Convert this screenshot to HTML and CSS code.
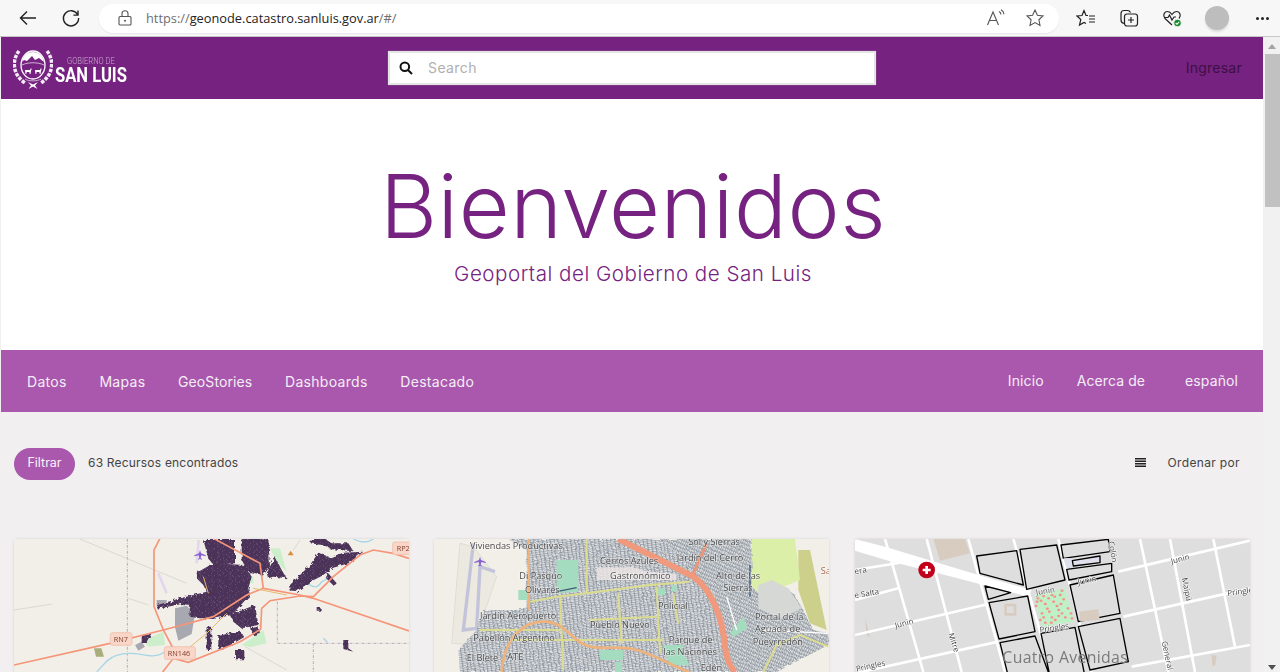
FILE: index.html
```html
<!DOCTYPE html>
<html lang="es">
<head>
<meta charset="utf-8">
<title>Geoportal del Gobierno de San Luis</title>
<link rel="stylesheet" href="styles.css">
</head>
<body>
<div class="window">
  <div class="chrome">
    <button class="tool tool-back"><svg width="20" height="20" viewBox="0 0 20 20"><path class="ic" d="M18 10H2.500M9 3.500 2.500 10 9 16.500"/></svg></button>
    <button class="tool tool-reload"><svg width="20" height="20" viewBox="0 0 20 20"><path class="ic" d="M16.600 6.500A7.600 7.600 0 1 0 17.600 10M17 2.500v4.600h-4.600"/></svg></button>
    <div class="address">
      <svg class="lock" width="14" height="16" viewBox="0 0 14 16"><path class="ic-thin" d="M2 6.500h10a1 1 0 0 1 1 1V14a1 1 0 0 1-1 1H2a1 1 0 0 1-1-1V7.500a1 1 0 0 1 1-1ZM4 6.500V3.800a3 3 0 0 1 6 0v2.700"/><circle class="ic-fill" cx="7" cy="10.700" r="1"/></svg>
      <span class="url"><span class="url-dim">https://</span>geonode.catastro.sanluis.gov.ar<span class="url-dim">/#/</span></span>
      <div class="addr-end">
        <svg width="20" height="18" viewBox="0 0 20 18"><path class="ic-thin" d="M1.500 16 7 3l5.500 13M3.500 11.500h7M13 2.500c1.200.6 1.800 1.500 2 3M15 .8c1.800.9 2.800 2.300 3 4.500"/></svg>
        <svg width="20" height="20" viewBox="0 0 20 20"><path class="ic-thin" d="m10 2 2.400 5.200 5.600.7-4.100 3.900 1.100 5.600-5-2.800-5 2.800 1.100-5.600L2 7.900l5.600-.7Z"/></svg>
      </div>
    </div>
    <div class="tools-right">
      <svg width="20" height="20" viewBox="0 0 20 20"><path class="ic-med" d="M12 7.500H10L8 2.500 6 7.500 1 8l3.800 3.500L3.500 17 8 14.500l2 1M13 8h6M13 11h6M13 14h6"/></svg>
      <svg width="20" height="20" viewBox="0 0 20 20"><path class="ic-med" d="M5 15.500C3 15 2 14 2 12V5.500C2 3.500 3.500 2.500 5 2.500h3.500c1.500 0 2.500.8 3 2"/><rect class="ic-med" x="5.500" y="6" width="13" height="12" rx="2.500"/><path class="ic-med" d="M12 9v6M9 12h6"/></svg>
      <svg width="20" height="20" viewBox="0 0 20 20"><path class="ic-med" d="M10 17 3 10.500C.5 8 2 3.500 5.500 3.500c2 0 3.500 1.500 4.500 3 1-1.500 2.500-3 4.500-3C18 3.500 19.500 8 17 10.500M2.500 9.500H6l1.500-2.500 2.500 5 2-3h2"/><circle class="badge" cx="15.500" cy="15" r="3.800"/><path class="badge-check" d="m13.700 15 1.300 1.300 2.200-2.400"/></svg>
      <span class="avatar"></span>
      <span class="dots"><i></i><i></i><i></i></span>
    </div>
  </div>

  <div class="viewport">
    <main class="page">
      <header class="topbar">
        <a class="logo">
          <svg class="crest" width="40" height="42" viewBox="0 0 40 42">
            <path class="crest-wreath" d="M6 3C-1 12-1 26 12 35M34 3C41 12 41 26 28 35"/>
            <ellipse class="crest-ring" cx="20" cy="17" rx="12" ry="14"/>
            <path class="crest-leaf" d="M9 14C10 7 15 4 20 4s10 3 11 10l-5-4-4 2-3-4-5 5-3-1Z"/>
            <path class="crest-thin" d="M9 17c6-3 16-3 22 0"/>
            <path class="crest-leaf" d="M12 22h5l1-2 .6 1-.6 2-.5 3h-.8l-.4-2h-2.600l-.4 2h-.8ZM22 22h5l1-2 .6 1-.6 2-.5 3h-.8l-.4-2h-2.600l-.4 2h-.8Z"/>
            <path class="crest-thin" d="M12 31c4 2.500 12 2.500 16 0"/>
            <path class="crest-leaf" d="m15 34 5 2.500 5-2.500-3 3.500 2.500 3.500-4.500-2.500L15.500 41l2.500-3.500Z"/>
          </svg>
          <span class="logo-text"><span class="logo-small">GOBIERNO DE</span><span class="logo-big">SAN LUIS</span></span>
        </a>
        <div class="search">
          <svg width="14" height="14" viewBox="0 0 14 14"><circle class="search-ic" cx="5.800" cy="5.800" r="4.300"/><path class="search-ic" d="m9 9 4 4"/></svg>
          <span class="placeholder">Search</span>
        </div>
        <a class="login">Ingresar</a>
      </header>

      <section class="hero">
        <h1>Bienvenidos</h1>
        <p>Geoportal del Gobierno de San Luis</p>
      </section>

      <nav class="menu">
        <ul class="menu-left">
          <li>Datos</li><li>Mapas</li><li class="tight">GeoStories</li><li>Dashboards</li><li>Destacado</li>
        </ul>
        <ul class="menu-right">
          <li>Inicio</li><li>Acerca de</li><li>español</li>
        </ul>
      </nav>

      <div class="toolbar">
        <button class="filter">Filtrar</button>
        <span class="count">63 Recursos encontrados</span>
        <svg class="list-ic" width="11" height="9" viewBox="0 0 11 9"><path class="list-lines" d="M0 .8h11M0 3.300h11M0 5.800h11M0 8.200h11"/></svg>
        <span class="sort">Ordenar por</span>
      </div>

      <div class="cards">
        <article class="card">
          <svg class="map" viewBox="42 27 1185 420">
            <defs>
              <filter id="rough" x="-5%" y="-5%" width="110%" height="110%">
                <feTurbulence type="fractalNoise" baseFrequency=".09" numOctaves="2" seed="4"/>
                <feDisplacementMap in="SourceGraphic" scale="14"/>
              </filter>
              <filter id="wobble" x="-5%" y="-5%" width="110%" height="110%">
                <feTurbulence type="fractalNoise" baseFrequency=".05" numOctaves="2" seed="9"/>
                <feDisplacementMap in="SourceGraphic" scale="12"/>
              </filter>
              <pattern id="cityTex" width="18" height="16" patternUnits="userSpaceOnUse">
                <rect class="tex-base" width="18" height="16"/>
                <path class="tex-spot" d="M3 3h3M12 9h3M7 13h2"/>
              </pattern>
            </defs>
            <rect class="m1-bg" x="42" y="27" width="1185" height="420"/>
            <path class="m1-park" d="M725 345 790 300 800 340 750 352ZM430 330 490 305 495 345 445 350ZM660 75h20v20h-20ZM810 55h30l20 70-30-30ZM740 140h20v20h-20Z"/>
            <path class="m1-olive" d="M282 355h22l8 25h-24Z"/>
            <path class="m1-bound" d="M382 27V426M832 215V340H1227M940 340V426"/>
            <path class="m1-thin" d="M240 27 560 160M42 240l115-18M735 350 860 420M880 60 900 30M385 205l60 20"/>
            <path class="m1-water" d="M290 426c20-20 30-40 60-50s60-5 90 0 50-5 60-15M920 160c20 10 30 20 45-5 10-5 20-10 30-15M1060 27c20 10 40 15 60 0M970 325l12 12"/>
            <path class="m1-air" d="M596 30 590 100M475 130l25 60"/>
            <path class="m1-grey" d="M525 235l35-8 25 25-10 60-40 20-10-40ZM470 210h30v20h-30ZM405 345l20-10 10 15-20 12Z"/>
            <g class="m1-rough">
              <path class="m1-city" d="M610 30H705L705 100 640 105 625 85ZM725 25H805L810 110 790 135 745 125 725 90Z"/>
              <path class="m1-city" d="M595 125 640 100 735 105 755 140 745 175 750 195 695 255 640 267 600 265 568 260 570 225 545 222 472 236 470 226 540 205 620 185 610 165 590 145Z"/>
              <path class="m1-city" d="M690 255 765 225 775 285 725 295 700 275ZM655 318 720 302 732 322 680 352 655 358ZM620 290h14v70h-14ZM705 360h28v28h-28ZM425 320l30-10-15 25-15 5ZM750 295l25-5 5 18-20 8ZM800 130l25-50 20 40 15 25-40-5-15 5Z"/>
              <path class="m1-city" d="M870 165 930 105 955 68 990 82 1030 68 1090 65 1050 98 1000 113 965 138 925 158 890 185 872 185ZM932 27H975L995 40H1045L1060 64 995 58 965 45 932 40ZM950 230l12 2v10h-12ZM1030 330h15v25l15 10-30-8ZM985 130l25 30-8 8-25-25Z"/>
            </g>
            <path class="m1-road" d="M42 405 330 340 490 300 640 260 740 195 790 175 900 195 940 205 1227 303"/>
            <path class="m1-road" d="M480 25 462 60V230L490 300 530 375M488 426 520 385 565 397 720 335 782 298 785 235 810 212 900 198 940 200 1000 140 1080 75 1120 60 1180 70 1227 85M640 25 780 100 790 175"/>
            <path class="m1-minor" d="M610 140 625 190M680 250 620 310 565 355M760 175 860 195"/>
            <path class="m1-tri" d="m872 62 9 14h-18Z"/>
            <path class="m1-plane" d="M600 60l3 10 14 6v3l-13-3-2 8 4 3v2l-6-2-6 2v-2l4-3-2-8-13 3v-3l14-6Z"/>
            <g class="m1-shield"><rect x="331" y="308" width="65" height="38" rx="6"/><rect x="493" y="350" width="93" height="38" rx="6"/><rect x="1178" y="36" width="60" height="38" rx="6"/></g>
            <text class="m1-label" x="341" y="335">RN7</text>
            <text class="m1-label" x="503" y="377">RN146</text>
            <text class="m1-label" x="1190" y="64">RP2</text>
          </svg>
        </article>

        <article class="card">
          <svg class="map" viewBox="12 27 1185 420">
            <defs>
              <pattern id="blocks" width="24" height="13" patternUnits="userSpaceOnUse" patternTransform="rotate(-8)">
                <rect class="m2-block" width="24" height="13"/>
                <path class="m2-street" d="M0 1h24M0 7.500h24M5 0v13M17 0v13"/>
              </pattern>
              <pattern id="blocksB" width="13" height="22" patternUnits="userSpaceOnUse" patternTransform="rotate(24)">
                <rect class="m2-block" width="13" height="22"/>
                <path class="m2-street" d="M1 0v22M7.500 0v22M0 6h13M0 17h13"/>
              </pattern>
            </defs>
            <rect class="m2-bg" x="12" y="27" width="1185" height="420"/>
            <path class="m2-apron" d="M90 40 65 340 130 345 200 140 130 50Z"/>
            <path class="m2-runway" d="M130 40 100 300 140 295 150 110 195 125"/>
            <path class="m2-olive" d="M1105 60 1140 60 1190 300 1140 280 1105 180Z"/>
            <path class="m2-pale" d="M965 27H1095L1110 150 1060 170 1000 200 965 170Z"/>
            <g class="m2-wobble">
              <path class="m2-blocks" d="M235 27 700 27 800 140 850 190 880 426 90 426 85 360 140 300 160 240 265 240 290 230 290 60Z"/>
              <path class="m2-blocks-b" d="M700 27 965 27 965 170 1000 200 1030 165 1090 190 1120 240 1150 300 1195 310 1195 345 1040 426 880 426 850 190 800 140Z"/>
            </g>
            <path class="m2-grey" d="M985 165l40-15 50 25 40 60-60 30-70-30Z"/>
            <path class="m2-green" d="M380 90h65v95l-65 5ZM900 310l40-50 12 35-40 25ZM265 180h30v30h-30ZM700 345h60v30l20 30h-60ZM510 360h70v30h-70ZM680 175h25v20h-25ZM725 165h15v20h-15ZM555 395h20v31h-20Z"/>
            <path class="m2-white" d="M500 112h110l40 12 90 8v18H500Z"/>
            <path class="m2-lines" d="M890 200 920 300M1000 300 1195 310"/>
            <path class="m2-yellow" d="M300 215 380 200 470 190 660 165 780 155M470 27V190M565 190 575 340M680 170 690 370M390 200 400 420M150 300H390M240 330H700M480 270 680 260M1195 350 1110 315 1040 345 1000 426M730 190 745 280"/>
            <path class="m2-road-thin" d="M215 426C220 340 270 270 350 275 410 280 430 340 480 350S560 345 620 360 760 426 780 426"/>
            <path class="m2-road-stem" d="M296 27V240"/>
            <path class="m2-main" d="M565 27 790 140C850 180 880 280 885 350 890 390 900 410 915 426"/>
            <path class="m2-main-b" d="M830 40 790 130"/>
            <path class="m2-dark" d="M380 185 440 173M960 105V200"/>
            <path class="m2-plane" d="M150 80l3 10 14 6v3l-13-3-2 8 4 3v2l-6-2-6 2v-2l4-3-2-8-13 3v-3l14-6Z"/>
            <text class="m2-label" x="120" y="58">Viviendas Productivas</text>
            <text class="m2-label" x="510" y="102">Cerros Azules</text>
            <text class="m2-label" x="740" y="93">Jardín del Cerro</text>
            <text class="m2-label" x="775" y="44">Sol y Sierras</text>
            <text class="m2-label" x="268" y="146">Di Pasquo</text>
            <text class="m2-label" x="540" y="146">Gastronómico</text>
            <text class="m2-label" x="858" y="146">Alto de las</text>
            <text class="m2-label" x="880" y="182">Sierras</text>
            <text class="m2-label" x="285" y="188">Olivares</text>
            <text class="m2-label" x="684" y="238">Policial</text>
            <text class="m2-label" x="150" y="267">Jardín Aeropuerto</text>
            <text class="m2-label" x="480" y="293">Pueblo Nuevo</text>
            <text class="m2-label" x="975" y="270">Portal de la</text>
            <text class="m2-label" x="975" y="307">Aguada de</text>
            <text class="m2-label" x="968" y="345">Pueyrredón</text>
            <text class="m2-label" x="130" y="334">Pabellón Argentino</text>
            <text class="m2-label" x="716" y="339">Parque de</text>
            <text class="m2-label" x="700" y="376">las Naciones</text>
            <text class="m2-label" x="110" y="393">El Blete</text>
            <text class="m2-label" x="232" y="389">ATE</text>
            <text class="m2-label" x="812" y="422">Edén</text>
            <text class="m2-label m2-edge" x="1172" y="131">Sa</text>
          </svg>
        </article>

        <article class="card">
          <svg class="map" viewBox="30 27 1185 420">
            <rect class="m3-bg" x="30" y="27" width="1185" height="420"/>
            <path class="m3-tan" d="M265 27 360 27 375 70 285 92ZM470 230l45-22 18 50-45 12ZM60 265l15 55-10-5ZM1100 375l15 2-5 30h-8Z"/>
            <path class="m3-road" d="M30 120 215 90M30 210 160 175M30 315 430 222M30 430 460 335M820 125 1215 32M835 260 1215 175M860 410 1215 345"/>
            <path class="m3-road" d="M120 27 235 426M245 27 350 426M370 27 480 426M505 27 620 426M640 27 740 426M885 27 970 426M975 27 1050 426M1105 27 1170 350"/>
            <path class="m3-avenue" d="M30 27 120 50 400 135 560 180 550 200 280 130 140 95 30 62Z"/>
            <path class="m3-block" d="M395 78 515 62 535 165 405 130ZM525 58 635 45 660 150 545 178ZM648 45 790 28 795 65 655 85ZM665 118 800 100 800 125 672 150ZM420 168 497 188 430 208ZM432 218 548 198 570 305 462 327ZM675 165 805 135 825 250 700 275ZM700 290 825 265 850 395 735 420ZM465 338 570 318 615 440H490ZM588 310 690 292 720 440H615Z"/>
            <path class="m3-lilac" d="M655 85 682 84 682 110 665 116Z"/>
            <path class="m3-strip" d="M682 92 765 78 765 98 685 108Z"/>
            <path class="m3-tan" d="M702 245l58-8 4 32-58 6Z"/>
            <path class="m3-tan-in" d="M482 225h28v28h-28Z"/>
            <path class="m3-park" d="M568 195 660 175 688 275 590 290Z"/>
            <path class="m3-dots" d="M578 205h2M595 198h2M620 195h2M650 182h2M572 228h2M600 222h2M625 215h2M655 208h2M590 250h2M612 245h2M640 240h2M668 235h2M600 278h2M630 270h2M660 262h2M680 265h2M585 270h2M610 205h2M635 228h2M575 215h2M645 195h2M620 262h2M650 250h2M587 212h2M606 236h2M628 200h2M647 222h2M677 250h2M595 262h2M640 258h2M618 278h2"/>
            <circle class="m3-pin" cx="245" cy="120" r="25"/>
            <path class="m3-cross" d="M245 108v24M233 120h24"/>
            <text class="m3-label" x="30" y="133" transform="rotate(-10 30 133)">era</text>
            <text class="m3-label" x="30" y="205" transform="rotate(-10 30 205)">e Salta</text>
            <text class="m3-label" x="152" y="295" transform="rotate(-15 152 295)">Junin</text>
            <text class="m3-label" x="310" y="312" transform="rotate(72 310 312)">Mitre</text>
            <text class="m3-label" x="35" y="425" transform="rotate(-12 35 425)">Pringles</text>
            <text class="m3-label" x="574" y="195" transform="rotate(-8 574 195)">Junin</text>
            <text class="m3-label" x="700" y="165" transform="rotate(-12 700 165)">Junin</text>
            <text class="m3-label" x="585" y="308" transform="rotate(-8 585 308)">Pringles</text>
            <text class="m3-label" x="980" y="102" transform="rotate(-15 980 102)">Junin</text>
            <text class="m3-label" x="1148" y="198" transform="rotate(-8 1148 198)">Pringles</text>
            <text class="m3-label" x="1010" y="145" transform="rotate(78 1010 145)">Maipú</text>
            <text class="m3-label" x="950" y="335" transform="rotate(78 950 335)">General</text>
            <text class="m3-label" x="790" y="35" transform="rotate(80 790 35)">Colón</text>
            <text class="m3-big" x="472" y="400">Cuatro Avenidas</text>
          </svg>
        </article>
      </div>
    </main>
    <div class="scrollbar">
      <span class="arrow-up"></span>
      <span class="thumb"></span>
      <span class="arrow-down"></span>
    </div>
  </div>
</div>
</body>
</html>
```

FILE: styles.css
```css
* { box-sizing: border-box; }
html, body { margin: 0; height: 100%; overflow: hidden; }
body { font-family: Inter, "Open Sans", sans-serif; background: #f1eff0; color: #333; }
ul { list-style: none; margin: 0; padding: 0; }
button { border: 0; background: none; padding: 0; font: inherit; }

.window { width: 1280px; height: 672px; display: flex; flex-direction: column; overflow: hidden; }

.chrome { height: 37px; flex: none; display: flex; align-items: center; background: #f7f7f7; border-bottom: 1px solid #c6c6c6; padding-left: 18px; }
.tool { width: 20px; height: 20px; display: flex; }
.tool-reload { margin-left: 23px; }
.ic { fill: none; stroke: #222; stroke-width: 1.4; }
.ic-thin { fill: none; stroke: #555; stroke-width: 1.1; }
.ic-med { fill: none; stroke: #222; stroke-width: 1.2; }
.ic-fill { fill: #555; }
.badge { fill: #178a2e; stroke: #fff; stroke-width: .8; }
.badge-check { fill: none; stroke: #fff; stroke-width: 1.1; }
.address { width: 960px; height: 29px; margin-left: 18px; border-radius: 15px; background: #fff; display: flex; align-items: center; padding-left: 19px; box-shadow: 0 1px 1px #e6e6e6; }
.lock { flex: none; }
.url { margin-left: 14px; font: 12.8px "Open Sans", sans-serif; color: #222; white-space: nowrap; }
.url-dim { color: #6e6e6e; }
.addr-end { margin-left: auto; display: flex; gap: 19px; padding-right: 14px; align-items: center; }
.tools-right { display: flex; align-items: center; margin-left: 17px; }
.tools-right > svg { margin-right: 23px; }
.avatar { width: 24px; height: 24px; margin-left: 0; border-radius: 50%; background: #bdbdbd; box-shadow: 0 2px 2px #dcdcdc; }
.dots { display: flex; gap: 2px; margin-left: 27px; }
.dots i { width: 3px; height: 3px; border-radius: 50%; background: #222; }

.viewport { flex: 1; min-height: 0; display: flex; }
.page { width: 1264px; height: 100%; overflow: hidden; padding-right: 1px; }

.topbar { height: 62px; margin-left: 1px; background: #762280; display: flex; align-items: center; padding: 0 21px 0 12px; }
.logo { display: flex; align-items: center; width: 375px; }
.crest { flex: none; margin-top: 1px; }
.crest-leaf { fill: #fff; }
.crest-wreath { fill: none; stroke: #fff; stroke-width: 3.500; stroke-dasharray: 3.500 1.200; opacity: .9; }
.crest-ring { fill: none; stroke: #fff; stroke-width: 1.300; }
.crest-thin { fill: none; stroke: #e6d3e8; stroke-width: .8; }
.logo-text { display: flex; flex-direction: column; align-items: flex-start; margin-left: 2px; padding-top: 4px; }
.logo-small { font: 300 9.500px/10px Roboto, sans-serif; color: #c9a6cf; margin-left: 12px; transform: scaleX(.8); transform-origin: left; white-space: nowrap; }
.logo-big { font: 700 21px/19px Roboto, sans-serif; color: #fff; transform: scaleX(.79); transform-origin: left; white-space: nowrap; }
.search { width: 488px; height: 34px; background: #fff; border: 2px solid #e4e4e4; display: flex; align-items: center; padding-left: 9px; box-shadow: 0 0 1px #999; }
.search-ic { fill: none; stroke: #111; stroke-width: 2; }
.placeholder { margin-left: 15px; padding-bottom: 1px; font-size: 14px; color: #b0b0b0; letter-spacing: .4px; }
.login { margin-left: auto; padding-bottom: 1px; font-size: 14px; color: #3d1044; letter-spacing: .25px; }

.hero { height: 251px; background: #fff; margin-left: 1px; color: #762280; text-align: center; display: flex; flex-direction: column; align-items: center; padding-top: 59px; padding-left: 2px; }
.hero h1 { margin: 0; font-size: 88px; line-height: 96px; font-weight: 300; letter-spacing: .55px; }
.hero p { margin: 6px 0 0; font-size: 20.600px; line-height: 28px; font-weight: 350; letter-spacing: .5px; }

.menu { height: 62px; margin-left: 1px; background: #a958ae; color: #f5eef6; display: flex; justify-content: space-between; align-items: center; padding: 0 25px 0 26px; font-size: 14px; letter-spacing: .3px; }
.menu-left { display: flex; gap: 32.700px; }
.menu-left .tight { letter-spacing: .1px; }
.menu-right { display: flex; gap: 33px; padding-bottom: 2px; letter-spacing: .1px; }
.menu-right li:last-child { margin-left: 7px; }

.toolbar { display: flex; align-items: center; height: 32px; margin-top: 36px; padding: 0 23px 0 14px; font-size: 12px; color: #444; }
.filter { width: 61px; height: 32px; padding-bottom: 3px; border-radius: 16px; background: #a958ae; color: #fbf5fb; font-size: 12.500px; }
.count { margin-left: 13px; margin-bottom: 4px; letter-spacing: .2px; }
.list-ic { margin-left: auto; margin-bottom: 3px; }
.list-lines { fill: none; stroke: #222; stroke-width: 1.500; }
.sort { margin-left: 22px; margin-bottom: 4px; letter-spacing: .35px; }

.cards { display: grid; grid-template-columns: repeat(3, 395px); column-gap: 25.400px; margin: 59px 0 0 14px; }
.card { height: 300px; background: #fff; border-radius: 3px 3px 0 0; overflow: hidden; box-shadow: 0 0 3px rgba(0,0,0,.12); }
.map { display: block; width: 395px; height: 140px; filter: blur(.35px); }

.tex-base { fill: #4c3159; }
.tex-spot { fill: none; stroke: #84748e; stroke-width: 2; }
.m1-rough { filter: url(#rough); }
.m1-bg { fill: #f2efe9; }
.m1-park { fill: #cdeeca; }
.m1-olive { fill: #a9ad7c; }
.m1-bound { fill: none; stroke: #b5a8b5; stroke-width: 3; stroke-dasharray: 8 4 2 4; }
.m1-thin { fill: none; stroke: #d0ccc5; stroke-width: 2; }
.m1-water { fill: none; stroke: #a6d6e6; stroke-width: 4; }
.m1-air { fill: none; stroke: #e4d6ee; stroke-width: 8; }
.m1-grey { fill: #a8a8b0; }
.m1-city { fill: url(#cityTex); }
.m1-road { fill: none; stroke: #f59578; stroke-width: 5; }
.m1-minor { fill: none; stroke: #e8b96a; stroke-width: 3; }
.m1-tri { fill: #d98a3a; }
.m1-plane { fill: #8461cf; }
.m1-shield rect { fill: #f9d6c8; stroke: #eeb7a3; stroke-width: 2; }
.m1-label { font: 22px "Open Sans", sans-serif; fill: #7e3e2c; }

.m2-bg { fill: #f2efe9; }
.m2-apron { fill: #ece9e0; stroke: #d8d5cc; stroke-width: 2; }
.m2-runway { fill: none; stroke: #c3c3da; stroke-width: 10; }
.m2-olive { fill: #cdd08a; }
.m2-pale { fill: #dcefa8; }
.m2-block { fill: #e4e5e6; }
.m2-street { fill: none; stroke: #6a7683; stroke-width: 1.800; }
.m2-wobble { filter: url(#wobble); }
.m2-blocks { fill: url(#blocks); }
.m2-blocks-b { fill: url(#blocksB); }
.m2-grey { fill: #d6d8d6; }
.m2-green { fill: #a4dcc0; }
.m2-white { fill: #efe6e6; opacity: .8; }
.m2-lines { fill: none; stroke: #fff; stroke-width: 4; }
.m2-yellow { fill: none; stroke: #dcdc90; stroke-width: 6; }
.m2-road-thin { fill: none; stroke: #eeb27c; stroke-width: 8; }
.m2-road-stem { fill: none; stroke: #eeb27c; stroke-width: 7; }
.m2-main { fill: none; stroke: #f0997c; stroke-width: 18; }
.m2-main-b { fill: none; stroke: #e8957a; stroke-width: 9; }
.m2-dark { fill: none; stroke: #445a78; stroke-width: 4; }
.m2-plane { fill: #8461cf; }
.m2-label { font: 27.500px "Open Sans", sans-serif; fill: #4c4c4c; paint-order: stroke; stroke: rgba(255,255,255,.45); stroke-width: 4px; }
.m2-edge { fill: #a86a50; }

.m3-bg { fill: #dedede; }
.m3-tan { fill: #d8ccc0; }
.m3-road { fill: none; stroke: #fff; stroke-width: 8; }
.m3-avenue { fill: #fff; }
.m3-block { fill: #dedede; stroke: #000; stroke-width: 4; stroke-linejoin: round; }
.m3-lilac { fill: #dfe0ec; }
.m3-strip { fill: #dfe0ec; stroke: #000; stroke-width: 4; stroke-linejoin: round; }
.m3-park { fill: #c0f0c8; }
.m3-dots { fill: none; stroke: #f78f8a; stroke-width: 7; stroke-linecap: round; }
.m3-tan-in { fill: #dedede; stroke: #d8ccc0; stroke-width: 8; }
.m3-pin { fill: #c1001a; }
.m3-cross { fill: none; stroke: #fff; stroke-width: 8; }
.m3-label { font: 24px "Open Sans", sans-serif; fill: #444; paint-order: stroke; stroke: #fff; stroke-width: 3px; }
.m3-big { font: 47.500px "Open Sans", sans-serif; fill: #7a7a7a; letter-spacing: 1px; }

.scrollbar { width: 16px; flex: none; background: #f1f1f1; display: flex; flex-direction: column; align-items: center; }
.arrow-up { margin-top: 7px; border: 4px solid transparent; border-top: 0; border-bottom: 5px solid #a3a3a3; }
.thumb { width: 15px; height: 153px; margin-top: 5px; background: #c1c1c1; }
.arrow-down { margin-top: auto; margin-bottom: 2px; border: 4px solid transparent; border-bottom: 0; border-top: 5px solid #505050; }
```
